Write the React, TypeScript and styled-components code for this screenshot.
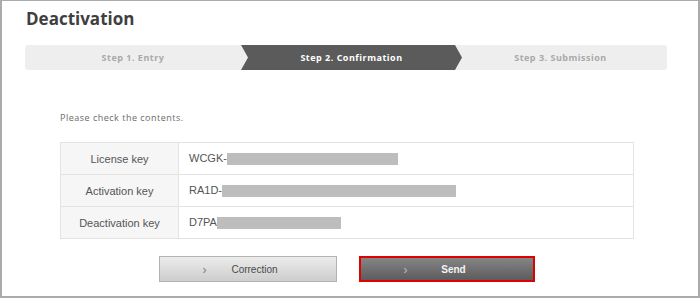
import React from 'react'
import styled, {createGlobalStyle} from 'styled-components'

const GlobalStyle = createGlobalStyle`
  html, body {
    margin: 0;
    padding: 0;
    background: #ffffff;
  }
  * {
    box-sizing: border-box;
  }
`

const Frame = styled.div`
  width: 700px;
  height: 298px;
  background: #ffffff;
  border-style: solid;
  border-color: #ababab;
  border-width: 1px 2px 2px 2px;
  padding: 6px 31px 0 23px;
  font-family: "Open Sans", "Liberation Sans", sans-serif;
`

const Title = styled.h1`
  margin: 0;
  font-size: 17px;
  line-height: 24px;
  font-weight: 700;
  color: #3f3f3f;
  padding-left: 1px;
`

const StepBar = styled.div`
  margin-top: 14px;
  height: 25px;
  display: grid;
  grid-template-columns: 216px 221px 1fr;
  background: #eeeeee;
  border-radius: 3px;
`

const Step = styled.div<{ $active?: boolean }>`
  display: flex;
  align-items: center;
  justify-content: center;
  font-size: 9px;
  font-weight: 700;
  letter-spacing: 0.5px;
  color: ${({$active}) => ($active ? '#ffffff' : '#a9a9a9')};
  background: ${({$active}) => ($active ? '#5b5b5b' : 'transparent')};
  clip-path: ${({$active}) =>
    $active
      ? 'polygon(0 0, calc(100% - 7px) 0, 100% 50%, calc(100% - 7px) 100%, 0 100%, 7px 50%)'
      : 'none'};

  &:last-child {
    padding-right: 8px;
  }
`

const Content = styled.div`
  padding: 0 10px 0 35px;
`

const Lead = styled.p`
  margin: 41px 0 0;
  font-size: 9px;
  line-height: 14px;
  letter-spacing: 0.5px;
  color: #6a6a6a;
`

const InfoTable = styled.table`
  margin-top: 17px;
  width: 574px;
  border-collapse: collapse;
  font-family: "Liberation Sans", Arial, sans-serif;
  font-size: 11px;
  color: #555555;
`

const Row = styled.tr`
  height: 32px;
`

const Label = styled.th`
  width: 118px;
  padding: 0;
  font-weight: 400;
  text-align: center;
  background: #f6f6f6;
  border: 1px solid #e3e3e3;
`

const Value = styled.td`
  padding: 0 0 0 10px;
  border: 1px solid #e3e3e3;
  white-space: nowrap;
`

const Mask = styled.span<{ $w: number }>`
  display: inline-block;
  vertical-align: middle;
  width: ${({$w}) => $w}px;
  height: 12px;
  margin-top: -2px;
  background: #bdbdbd;
`

const Actions = styled.div`
  margin-top: 17px;
  display: flex;
  justify-content: center;
  gap: 22px;
  padding-left: 1px;
`

const Button = styled.button<{ $primary?: boolean }>`
  position: relative;
  width: ${({$primary}) => ($primary ? '176px' : '178px')};
  height: 26px;
  padding: 0 0 0 14px;
  font-family: "Liberation Sans", Arial, sans-serif;
  font-size: 10px;
  font-weight: ${({$primary}) => ($primary ? 700 : 400)};
  color: ${({$primary}) => ($primary ? '#f4f4f4' : '#4a4a4a')};
  border: ${({$primary}) => ($primary ? '2px solid #e10000' : '1px solid #b4b4b4')};
  background: ${({$primary}) =>
    $primary
      ? 'linear-gradient(#858585, #5c5c5c)'
      : 'linear-gradient(#ececec, #cdcdcd)'};
  cursor: pointer;
`

const Chevron = styled.span<{ $primary?: boolean }>`
  position: absolute;
  left: 43px;
  top: 50%;
  transform: translateY(-45%);
  font-size: 12px;
  font-weight: 400;
  color: ${({$primary}) => ($primary ? '#bdbdbd' : '#7a7a7a')};
`

const steps = ['Step 1. Entry', 'Step 2. Confirmation', 'Step 3. Submission']

const rows = [
  {label: 'License key', prefix: 'WCGK-', mask: 171},
  {label: 'Activation key', prefix: 'RA1D-', mask: 234},
  {label: 'Deactivation key', prefix: 'D7PA', mask: 124},
]

export default function App() {
  return (
    <>
      <GlobalStyle/>
      <Frame>
        <Title>Deactivation</Title>
        <StepBar>
          {steps.map((s, i) => (
            <Step key={s} $active={i === 1}>{s}</Step>
          ))}
        </StepBar>
        <Content>
          <Lead>Please check the contents.</Lead>
          <InfoTable>
            <tbody>
              {rows.map(r => (
                <Row key={r.label}>
                  <Label>{r.label}</Label>
                  <Value>
                    {r.prefix}
                    <Mask $w={r.mask}/>
                  </Value>
                </Row>
              ))}
            </tbody>
          </InfoTable>
        </Content>
        <Actions>
          <Button>
            <Chevron>›</Chevron>
            Correction
          </Button>
          <Button $primary>
            <Chevron $primary>›</Chevron>
            Send
          </Button>
        </Actions>
      </Frame>
    </>
  )
}
